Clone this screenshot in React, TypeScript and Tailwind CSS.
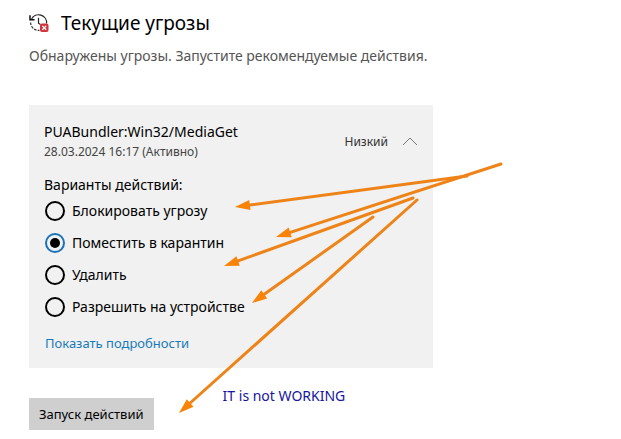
import { useState } from "react";

interface Arrow {
  from: [number, number];
  to: [number, number];
}

const ACTIONS = [
  { id: "block", label: "Блокировать угрозу" },
  { id: "quarantine", label: "Поместить в карантин" },
  { id: "remove", label: "Удалить" },
  { id: "allow", label: "Разрешить на устройстве" },
];

const ARROWS: Arrow[] = [
  { from: [467, 176], to: [235, 207] },
  { from: [501, 164], to: [276, 237] },
  { from: [413, 198], to: [224, 266] },
  { from: [373, 217], to: [252, 303] },
  { from: [417, 200], to: [179, 413] },
];

const HistoryIcon = () => (
  <svg className="w-5 h-5 shrink-0" viewBox="0 0 20 20" fill="none" aria-hidden="true">
    <path d="M2.6 6A8 8 0 0 1 17.6 10.5" stroke="#222" strokeWidth="1.2" />
    <path d="M1.6 9.6A8 8 0 0 0 10.5 17.4" stroke="#333" strokeWidth="1.2" strokeDasharray="2.6 1.2" />
    <path d="M1 2.2v4.6h4.6" stroke="#111" strokeWidth="1.5" />
    <path d="M9.5 4.8v5.4l2 1.2" stroke="#222" strokeWidth="1.2" />
    <rect x="11" y="10.5" width="8.5" height="8.5" rx="2" fill="#d0343c" />
    <path d="m13.4 12.9 3.8 3.8m0-3.8-3.8 3.8" stroke="#fff" strokeWidth="1.3" />
  </svg>
);

const Arrows = () => (
  <svg
    className="absolute left-0 top-0 pointer-events-none"
    width="520"
    height="420"
    viewBox="0 0 520 420"
    aria-hidden="true"
  >
    {ARROWS.map(({ from, to }) => {
      // unit vector along the shaft, used for the head's base corners
      const length = Math.hypot(to[0] - from[0], to[1] - from[1]);
      const ux = (to[0] - from[0]) / length;
      const uy = (to[1] - from[1]) / length;
      const bx = to[0] - ux * 15;
      const by = to[1] - uy * 15;
      const head = [
        [to[0], to[1]],
        [bx - uy * 5, by + ux * 5],
        [bx + uy * 5, by - ux * 5],
      ];
      return (
        <g key={to.join()}>
          <line
            x1={from[0]}
            y1={from[1]}
            x2={bx}
            y2={by}
            stroke="#ee8418"
            strokeWidth="3"
            strokeLinecap="round"
          />
          <polygon points={head.map((p) => p.join()).join(" ")} fill="#f98307" />
        </g>
      );
    })}
  </svg>
);

const App = () => {
  const [action, setAction] = useState("quarantine");
  const [open, setOpen] = useState(true);

  return (
    <main className="relative min-h-screen bg-white pl-[29px] pr-4 pt-[9px] pb-2 font-['Noto_Sans',sans-serif] text-black">
      <header>
        <h1 className="flex items-center gap-3 text-[19px] leading-7">
          <HistoryIcon />
          Текущие угрозы
        </h1>
        <p className="mt-[7px] text-[14px] leading-6 text-[#555]">
          Обнаружены угрозы. Запустите рекомендуемые действия.
        </p>
      </header>

      <section className="mt-[37px] max-w-[404px] bg-[#f1f1f1] px-[15px] pt-[17px] pb-[13px]">
        <div className="flex items-center justify-between">
          <div>
            <h2 className="text-[14px] leading-5">PUABundler:Win32/MediaGet</h2>
            <p className="text-[12px] leading-5 text-[#444]">28.03.2024 16:17 (Активно)</p>
          </div>
          <button
            type="button"
            onClick={() => setOpen(!open)}
            aria-expanded={open}
            className="flex items-center gap-[14px] text-[12px] leading-5 text-[#333]"
          >
            Низкий
            <svg className="w-4 h-4" viewBox="0 0 16 16" fill="none" aria-hidden="true">
              <path d={open ? "m1 11 7-7 7 7" : "m1 5 7 7 7-7"} stroke="#777" />
            </svg>
          </button>
        </div>

        {open && (
          <>
            <fieldset className="mt-[13px]">
              <legend className="text-[14px] leading-5">Варианты действий:</legend>
              {ACTIONS.map(({ id, label }) => (
                <label key={id} className="flex h-8 items-center gap-[7px] pl-px text-[14px] leading-5">
                  <input
                    type="radio"
                    name="action"
                    value={id}
                    checked={action === id}
                    onChange={() => setAction(id)}
                    className="grid h-5 w-5 shrink-0 appearance-none place-items-center rounded-full border-2 border-black before:h-[10px] before:w-[10px] before:rounded-full checked:border-[#1a73b8] checked:before:bg-black"
                  />
                  {label}
                </label>
              ))}
            </fieldset>
            <a href="#details" className="mt-2 block w-fit pl-px text-[13px] leading-6 text-[#1a7ab8]">
              Показать подробности
            </a>
          </>
        )}
      </section>

      <div className="mt-[30px] flex items-start gap-[69px]">
        <button type="button" className="h-8 bg-[#cfcfcf] px-[10px] text-[13px] leading-5">
          Запуск действий
        </button>
        <p className="-mt-3 text-[14px] leading-5 text-[#1515a0]">IT is not WORKING</p>
      </div>

      <Arrows />
    </main>
  );
};

export default App;
